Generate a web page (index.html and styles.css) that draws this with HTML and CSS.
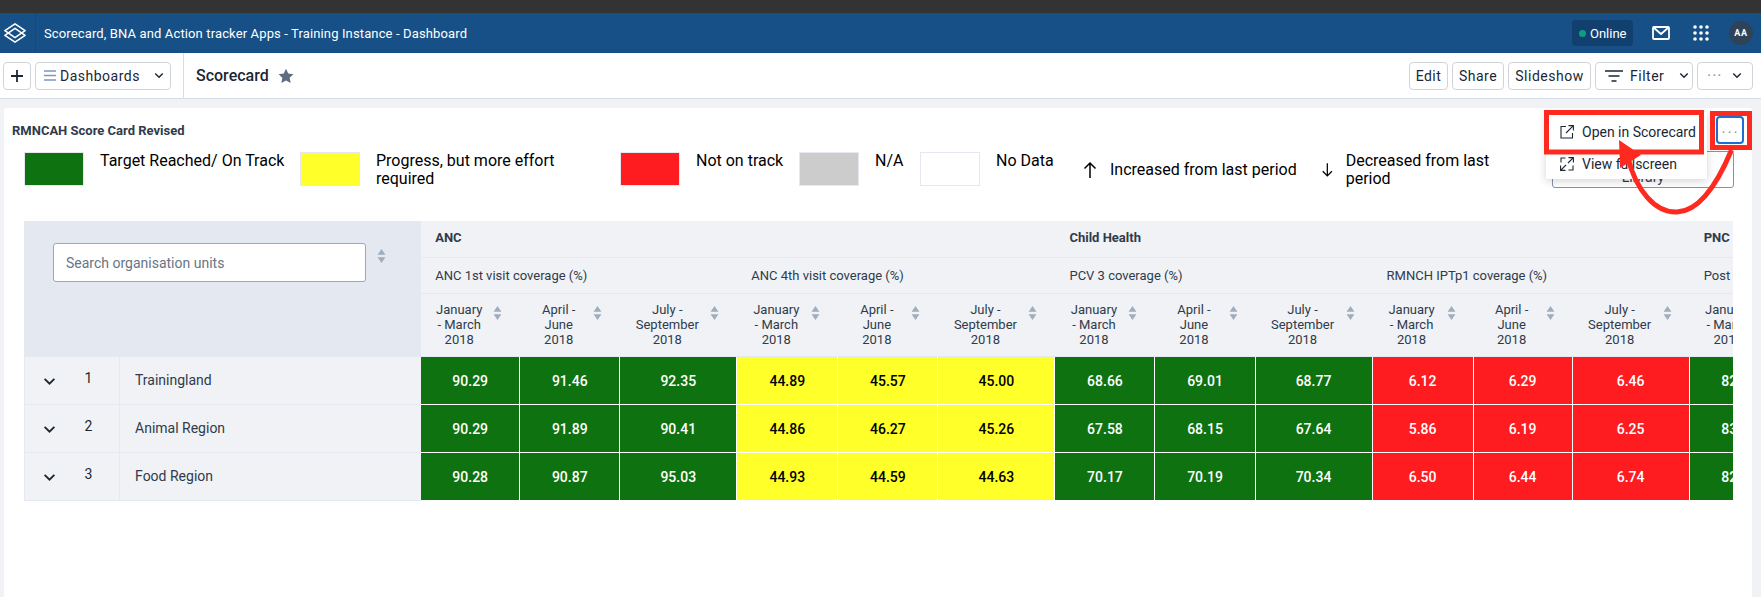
FILE: index.html
```html
<!DOCTYPE html>
<html lang="en">
<head>
    <meta charset="UTF-8">
    <meta name="viewport" content="width=device-width, initial-scale=1.0">
    <title>Scorecard - Dashboard</title>
    <link rel="stylesheet" href="styles.css">
</head>
<body>
    <svg class="defs" width="0" height="0">
        <symbol id="sort" viewBox="0 0 10 16">
            <path d="M5 0 L9.5 6.5 H0.5 Z M5 16 L9.5 9.5 H0.5 Z"/>
        </symbol>
        <symbol id="chevron" viewBox="0 0 12 8">
            <path d="M1.5 1.5 L6 6 L10.5 1.5" fill="none" stroke="currentColor" stroke-width="1.7"/>
        </symbol>
    </svg>

    <div class="topStrip"></div>

    <header class="header">
        <div class="logo">
            <svg width="22" height="22" viewBox="0 0 24 24" fill="none" stroke="#fff" stroke-width="1.7" stroke-linejoin="round">
                <path d="M12 2 L23 9.5 L12 17 L1 9.5 Z"/>
                <path d="M12 7 L23 14.5 L12 22 L1 14.5 Z"/>
            </svg>
        </div>
        <div class="appTitle">Scorecard, BNA and Action tracker Apps - Training Instance - Dashboard</div>
        <div class="headerRight">
            <div class="online"><span class="onlineDot"></span>Online</div>
            <svg class="mailIcon" width="18" height="14" viewBox="0 0 18 14" fill="none" stroke="#fff" stroke-width="1.8">
                <rect x="1" y="1" width="16" height="12" rx="1"/>
                <path d="M1.5 1.5 L9 8 L16.5 1.5"/>
            </svg>
            <svg class="appsIcon" width="16" height="16" viewBox="0 0 16 16" fill="#fff">
                <circle cx="2" cy="2" r="1.8"/><circle cx="8" cy="2" r="1.8"/><circle cx="14" cy="2" r="1.8"/>
                <circle cx="2" cy="8" r="1.8"/><circle cx="8" cy="8" r="1.8"/><circle cx="14" cy="8" r="1.8"/>
                <circle cx="2" cy="14" r="1.8"/><circle cx="8" cy="14" r="1.8"/><circle cx="14" cy="14" r="1.8"/>
            </svg>
            <div class="avatar">AA</div>
        </div>
    </header>

    <div class="toolbar">
        <div class="toolbarLeft">
            <button class="btn btnAdd">
                <svg width="12" height="12" viewBox="0 0 12 12" stroke="#1b2733" stroke-width="1.8"><path d="M6 0 V12 M0 6 H12"/></svg>
            </button>
            <button class="btn btnDashboards">
                <svg width="12" height="11" viewBox="0 0 12 11" stroke="#7f95c6" stroke-width="1.5"><path d="M0 1 H12 M0 5.5 H12 M0 10 H12"/></svg>
                <span>Dashboards</span>
                <svg class="btnChevron" width="10" height="7"><use href="#chevron"/></svg>
            </button>
        </div>
        <div class="dashName">Scorecard</div>
        <svg class="star" width="16" height="16" viewBox="0 0 24 24" fill="#5f6d80"><path d="M12 1 L15.4 8.2 L23.2 9.2 L17.5 14.6 L19 22.4 L12 18.6 L5 22.4 L6.5 14.6 L0.8 9.2 L8.6 8.2 Z"/></svg>
        <div class="toolbarRight">
            <button class="btn btnEdit">Edit</button>
            <button class="btn btnShare">Share</button>
            <button class="btn btnSlideshow">Slideshow</button>
            <button class="btn btnFilter">
                <svg width="18" height="12" viewBox="0 0 18 12" stroke="#1b2733" stroke-width="1.6"><path d="M0 1 H18 M3.5 6 H14.5 M6.5 11 H11.5"/></svg>
                <span>Filter</span>
                <svg class="btnChevron" width="10" height="7"><use href="#chevron"/></svg>
            </button>
            <button class="btn btnMore">
                <span class="dots">&middot;&middot;&middot;</span>
                <svg class="btnChevron" width="10" height="7"><use href="#chevron"/></svg>
            </button>
        </div>
    </div>

    <main class="main">
        <section class="card">
            <div class="cardHead">
                <h2 class="cardTitle">RMNCAH Score Card Revised</h2>
                <button class="cardMenuBtn">&middot;&middot;&middot;</button>
            </div>

            <div class="menu">
                <div class="menuItem">
                    <svg width="14" height="14" viewBox="0 0 14 14" fill="none" stroke="#1b2733" stroke-width="1.1"><path d="M6 1.5 H1 V13 H12.5 V8 M8.5 .6 H13.4 V5.5 M13.4 .6 L6 8"/></svg>
                    Open in Scorecard
                </div>
                <div class="menuItem">
                    <svg width="14" height="14" viewBox="0 0 14 14" fill="none" stroke="#1b2733" stroke-width="1.1"><path d="M8.5 .6 H13.4 V5.5 M13.4 .6 L8 6 M5.5 13.4 H.6 V8.5 M.6 13.4 L6 8 M1 5.5 V1 H5.5 M13 8.5 V13 H8.5"/></svg>
                    View fullscreen
                </div>
            </div>

            <div class="legend">
                <div class="legendItem"><span class="swatch green"></span><span>Target Reached/ On Track</span></div>
                <div class="legendItem legendWrap"><span class="swatch yellow"></span><span>Progress, but more effort required</span></div>
                <div class="legendItem"><span class="swatch red"></span><span>Not on track</span></div>
                <div class="legendItem"><span class="swatch grey"></span><span>N/A</span></div>
                <div class="legendItem"><span class="swatch blank"></span><span>No Data</span></div>
                <div class="legendArrow">
                    <svg width="20" height="18" viewBox="0 0 20 18" fill="none" stroke="#000" stroke-width="1.5"><path d="M10 17 V2 M4.5 7.5 L10 2 L15.5 7.5"/></svg>
                    <span>Increased from last period</span>
                </div>
                <div class="legendArrow">
                    <svg width="20" height="18" viewBox="0 0 20 18" fill="none" stroke="#000" stroke-width="1.5"><path d="M10 1 V16 M4.5 10.5 L10 16 L15.5 10.5"/></svg>
                    <span>Decreased from last period</span>
                </div>
                <button class="libraryBtn">Library</button>
            </div>

            <div class="tableWrap">
                <table class="scoreTable">
                    <colgroup>
                        <col class="colToggle"><col class="colNum"><col class="colName">
                        <col class="colA"><col class="colB"><col class="colC">
                        <col class="colD"><col class="colB"><col class="colC">
                        <col class="colB"><col class="colB"><col class="colC">
                        <col class="colD"><col class="colA"><col class="colC">
                        <col class="colB"><col class="colB"><col class="colC">
                    </colgroup>
                    <thead>
                        <tr class="rowGroup">
                            <th class="searchCell" colspan="3" rowspan="3">
                                <div class="searchBox">
                                    <input class="searchInput" type="text" placeholder="Search organisation units">
                                    <svg class="sortIcon"><use href="#sort"/></svg>
                                </div>
                            </th>
                            <th class="groupCell" colspan="6">ANC</th>
                            <th class="groupCell" colspan="6">Child Health</th>
                            <th class="groupCell" colspan="3">PNC</th>
                        </tr>
                        <tr class="rowIndicator">
                            <th colspan="3">ANC 1st visit coverage (%)</th>
                            <th colspan="3">ANC 4th visit coverage (%)</th>
                            <th colspan="3">PCV 3 coverage (%)</th>
                            <th colspan="3">RMNCH IPTp1 coverage (%)</th>
                            <th colspan="3">Post natal coverage (%)</th>
                        </tr>
                        <tr class="rowPeriod">
                            <th><div class="period"><span>January - March 2018</span><svg class="sortIcon"><use href="#sort"/></svg></div></th>
                            <th><div class="period"><span>April - June 2018</span><svg class="sortIcon"><use href="#sort"/></svg></div></th>
                            <th><div class="period"><span>July - September 2018</span><svg class="sortIcon"><use href="#sort"/></svg></div></th>
                            <th><div class="period"><span>January - March 2018</span><svg class="sortIcon"><use href="#sort"/></svg></div></th>
                            <th><div class="period"><span>April - June 2018</span><svg class="sortIcon"><use href="#sort"/></svg></div></th>
                            <th><div class="period"><span>July - September 2018</span><svg class="sortIcon"><use href="#sort"/></svg></div></th>
                            <th><div class="period"><span>January - March 2018</span><svg class="sortIcon"><use href="#sort"/></svg></div></th>
                            <th><div class="period"><span>April - June 2018</span><svg class="sortIcon"><use href="#sort"/></svg></div></th>
                            <th><div class="period"><span>July - September 2018</span><svg class="sortIcon"><use href="#sort"/></svg></div></th>
                            <th><div class="period"><span>January - March 2018</span><svg class="sortIcon"><use href="#sort"/></svg></div></th>
                            <th><div class="period"><span>April - June 2018</span><svg class="sortIcon"><use href="#sort"/></svg></div></th>
                            <th><div class="period"><span>July - September 2018</span><svg class="sortIcon"><use href="#sort"/></svg></div></th>
                            <th><div class="period"><span>January - March 2018</span><svg class="sortIcon"><use href="#sort"/></svg></div></th>
                            <th><div class="period"><span>April - June 2018</span><svg class="sortIcon"><use href="#sort"/></svg></div></th>
                            <th><div class="period"><span>July - September 2018</span><svg class="sortIcon"><use href="#sort"/></svg></div></th>
                        </tr>
                    </thead>
                    <tbody>
                        <tr>
                            <td class="toggleCell"><svg width="13" height="9"><use href="#chevron"/></svg></td>
                            <td class="numCell">1</td>
                            <td class="nameCell">Trainingland</td>
                            <td class="val green">90.29</td><td class="val green">91.46</td><td class="val green">92.35</td>
                            <td class="val yellow">44.89</td><td class="val yellow">45.57</td><td class="val yellow">45.00</td>
                            <td class="val green">68.66</td><td class="val green">69.01</td><td class="val green">68.77</td>
                            <td class="val red">6.12</td><td class="val red">6.29</td><td class="val red">6.46</td>
                            <td class="val green">82.10</td><td class="val green">82.45</td><td class="val green">82.30</td>
                        </tr>
                        <tr>
                            <td class="toggleCell"><svg width="13" height="9"><use href="#chevron"/></svg></td>
                            <td class="numCell">2</td>
                            <td class="nameCell">Animal Region</td>
                            <td class="val green">90.29</td><td class="val green">91.89</td><td class="val green">90.41</td>
                            <td class="val yellow">44.86</td><td class="val yellow">46.27</td><td class="val yellow">45.26</td>
                            <td class="val green">67.58</td><td class="val green">68.15</td><td class="val green">67.64</td>
                            <td class="val red">5.86</td><td class="val red">6.19</td><td class="val red">6.25</td>
                            <td class="val green">83.20</td><td class="val green">83.05</td><td class="val green">83.40</td>
                        </tr>
                        <tr>
                            <td class="toggleCell"><svg width="13" height="9"><use href="#chevron"/></svg></td>
                            <td class="numCell">3</td>
                            <td class="nameCell">Food Region</td>
                            <td class="val green">90.28</td><td class="val green">90.87</td><td class="val green">95.03</td>
                            <td class="val yellow">44.93</td><td class="val yellow">44.59</td><td class="val yellow">44.63</td>
                            <td class="val green">70.17</td><td class="val green">70.19</td><td class="val green">70.34</td>
                            <td class="val red">6.50</td><td class="val red">6.44</td><td class="val red">6.74</td>
                            <td class="val green">82.70</td><td class="val green">82.15</td><td class="val green">82.60</td>
                        </tr>
                    </tbody>
                </table>
            </div>
        </section>
    </main>

    <!-- red marks drawn on top of the screenshot -->
    <svg class="marks" width="1761" height="597" viewBox="0 0 1761 597" fill="none" stroke="#ff2a1f">
        <rect x="1546.5" y="112.5" width="155" height="39.5" stroke-width="5"/>
        <rect x="1712.5" y="113.5" width="37" height="34" stroke-width="5"/>
        <path d="M1731.5 150 C1724 168 1705 211 1677 212 C1655 213 1636 190 1628 158" stroke-width="5"/>
        <path d="M1619 140 L1641 155 L1620 168 Z" fill="#ff2a1f" stroke="none"/>
    </svg>
</body>
</html>
```

FILE: styles.css
```css
* {
    box-sizing: border-box;
}

body {
    font-family: Roboto, "Liberation Sans", sans-serif;
    background-color: #f0f2f6;
    color: #1b2733;
    margin: 0;
    padding: 0;
    height: 597px;
    overflow: hidden;
    position: relative;
}

.defs {
    position: absolute;
}

.topStrip {
    height: 13px;
    background-color: #333;
}

/* blue app header */
.header {
    height: 40px;
    background-color: #175086;
    color: #fff;
    display: flex;
    align-items: center;
}

.logo {
    width: 36px;
    height: 100%;
    padding-left: 4px;
    display: flex;
    align-items: center;
    border-right: 1px solid #144877;
}

.appTitle {
    margin-left: 8px;
    font-size: 13px;
    letter-spacing: .13px;
}

.headerRight {
    margin-left: auto;
    display: flex;
    align-items: center;
}

.online {
    width: 61px;
    height: 26px;
    background-color: #12406e;
    border-radius: 4px;
    font-size: 13px;
    display: flex;
    align-items: center;
    padding-left: 7px;
    gap: 4px;
}

.onlineDot {
    width: 7px;
    height: 7px;
    border-radius: 50%;
    background-color: #0f9d7f;
}

.mailIcon {
    margin-left: 19px;
}

.appsIcon {
    margin-left: 23px;
}

.avatar {
    width: 24px;
    height: 24px;
    margin: 0 8px 0 20px;
    border-radius: 50%;
    background-color: #2e4358;
    font-size: 9px;
    font-weight: 700;
    letter-spacing: .6px;
    display: flex;
    align-items: center;
    justify-content: center;
}

/* dashboard toolbar */
.toolbar {
    height: 46px;
    background-color: #fff;
    border-bottom: 1px solid #d5dde6;
    display: flex;
    align-items: center;
}

.toolbarLeft {
    width: 184px;
    height: 100%;
    padding-left: 3px;
    display: flex;
    align-items: center;
    gap: 4px;
    border-right: 1px solid #d5dde6;
}

.btn {
    height: 28px;
    background-color: #fff;
    border: 1px solid #cfd4da;
    border-radius: 4px;
    color: #1b2733;
    font-family: inherit;
    font-size: 14px;
    letter-spacing: .5px;
    padding: 0;
    display: flex;
    align-items: center;
    justify-content: center;
}

.btnAdd {
    width: 28px;
}

.btnDashboards {
    width: 136px;
    justify-content: flex-start;
    padding-left: 8px;
    gap: 4px;
}

.btnChevron {
    color: #1b2733;
}

.btnDashboards .btnChevron {
    margin-left: 10px;
}

.dashName {
    margin-left: 12px;
    font-size: 16px;
    font-weight: 500;
}

.star {
    margin-left: 9px;
}

.toolbarRight {
    margin-left: auto;
    margin-right: 8px;
    display: flex;
    gap: 4px;
}

.btnEdit {
    width: 39px;
}

.btnShare {
    width: 52px;
}

.btnSlideshow {
    width: 83px;
}

.btnFilter {
    width: 98px;
    justify-content: flex-start;
    padding-left: 9px;
    gap: 7px;
}

.btnFilter .btnChevron {
    margin-left: 8px;
}

.btnMore {
    width: 56px;
    justify-content: space-between;
    padding: 0 10px 0 9px;
}

.dots {
    color: #8a95a1;
    font-size: 16px;
    letter-spacing: 1px;
}

/* main card */
.main {
    padding: 9px 9px 0 4px;
}

.card {
    position: relative;
    height: 500px;
    background-color: #fff;
    border-radius: 3px;
    padding: 8px;
}

.cardHead {
    height: 28px;
    display: flex;
    align-items: center;
    justify-content: space-between;
}

.cardTitle {
    margin: 0;
    font-size: 13px;
    font-weight: 700;
    color: #2f3b4a;
}

.cardMenuBtn {
    width: 28px;
    height: 28px;
    background-color: #fff;
    border: 2px solid #1a6fd0;
    border-radius: 4px;
    color: #8a95a1;
    font-size: 15px;
    letter-spacing: 1px;
    padding: 0;
}

.menu {
    position: absolute;
    top: 4px;
    left: 1542px;
    width: 161px;
    height: 67px;
    padding-top: 4px;
    background-color: #fff;
    box-shadow: 0 2px 8px rgba(33, 41, 52, .2);
    z-index: 2;
}

.menuItem {
    height: 32px;
    padding-left: 14px;
    display: flex;
    align-items: center;
    gap: 8px;
    font-size: 14px;
}

/* legend */
.legend {
    margin: 7px 0 0 12px;
    display: grid;
    grid-template-columns: 276px 320px 179px 121px 160px 239px 187px 228px;
    font-size: 16px;
    line-height: 18px;
    color: #000;
}

.legendItem {
    display: flex;
    gap: 16px;
    padding-top: 1px;
}

.legendWrap {
    padding-right: 60px;
}

.swatch {
    flex: none;
    width: 60px;
    height: 34px;
    border: 1px solid #e4e8f0;
}

.legendArrow {
    display: flex;
    align-items: center;
    gap: 10px;
    height: 37px;
}

.libraryBtn {
    width: 182px;
    height: 37px;
    margin-left: 46px;
    padding: 0;
    background-color: #fff;
    border: 1px solid #8593a3;
    border-radius: 3px;
    color: #2f3b4a;
    font-family: inherit;
    font-size: 14px;
    display: flex;
    align-items: flex-end;
    justify-content: center;
    padding-bottom: 2px;
}

.green {
    background-color: #0f7210;
    color: #fff;
}

.yellow {
    background-color: #ffff2a;
    color: #000;
}

.red {
    background-color: #ff1c20;
    color: #fff;
}

.grey {
    background-color: #ccc;
}

.blank {
    background-color: #fff;
}

/* score table */
.tableWrap {
    margin: 33px 0 0 12px;
    width: 1709px;
    overflow: hidden;
}

.scoreTable {
    table-layout: fixed;
    width: 1983px;
    border-collapse: separate;
    border-spacing: 0;
    font-size: 13px;
}

.colToggle {
    width: 46px;
}

.colNum {
    width: 50px;
}

.colName {
    width: 301px;
}

.colA {
    width: 99px;
}

.colB {
    width: 100px;
}

.colC {
    width: 117px;
}

.colD {
    width: 101px;
}

.scoreTable th {
    background-color: #f0f2f6;
    font-weight: 400;
    text-align: left;
    color: #2f3b4a;
    padding: 0 0 1px 14px;
    border-bottom: 1px solid #e4e8f0;
}

.rowGroup {
    height: 37px;
}

.rowIndicator {
    height: 36px;
}

.rowPeriod {
    height: 63px;
}

.scoreTable .groupCell {
    font-weight: 700;
    padding-bottom: 3px;
}

.scoreTable .searchCell {
    background-color: #e4e8f0;
    vertical-align: top;
    padding: 22px 0 0 29px;
    border-bottom: none;
}

.searchBox {
    display: flex;
    align-items: flex-start;
    gap: 11px;
}

.searchInput {
    width: 313px;
    height: 39px;
    padding-left: 12px;
    background-color: #fff;
    border: 1px solid #9aa8b8;
    border-radius: 3px;
    font-family: inherit;
    font-size: 14px;
}

.searchInput::placeholder {
    color: #667585;
    opacity: 1;
}

.sortIcon {
    flex: none;
    width: 9px;
    height: 14px;
    fill: #a0adbd;
}

.searchBox .sortIcon {
    margin-top: 6px;
}

.period {
    display: flex;
    align-items: flex-start;
    gap: 10px;
    padding-right: 18px;
    line-height: 15px;
    text-align: center;
}

.period span {
    flex: 1;
}

.period .sortIcon {
    margin-top: 4px;
}

.scoreTable td {
    height: 48px;
    padding: 0;
    font-size: 14px;
}

.toggleCell {
    background-color: #f0f2f6;
    text-align: right;
    padding-right: 14px !important;
    border-left: 1px solid #e4e8f0;
    border-bottom: 1px solid #e4e8f0;
    color: #1b2733;
}

.numCell {
    background-color: #f0f2f6;
    padding: 0 12px 6px 0 !important;
    text-align: center;
    border-right: 1px solid #e4e8f0;
    border-bottom: 1px solid #e4e8f0;
}

.nameCell {
    background-color: #f0f2f6;
    padding: 0 0 2px 15px !important;
    color: #2f3b4a;
    border-bottom: 1px solid #e4e8f0;
}

.val {
    text-align: center;
    font-weight: 500;
    border-right: 1px solid #fff;
    border-bottom: 1px solid #fff;
}

.marks {
    position: absolute;
    top: 0;
    left: 0;
    z-index: 5;
    pointer-events: none;
}
```
